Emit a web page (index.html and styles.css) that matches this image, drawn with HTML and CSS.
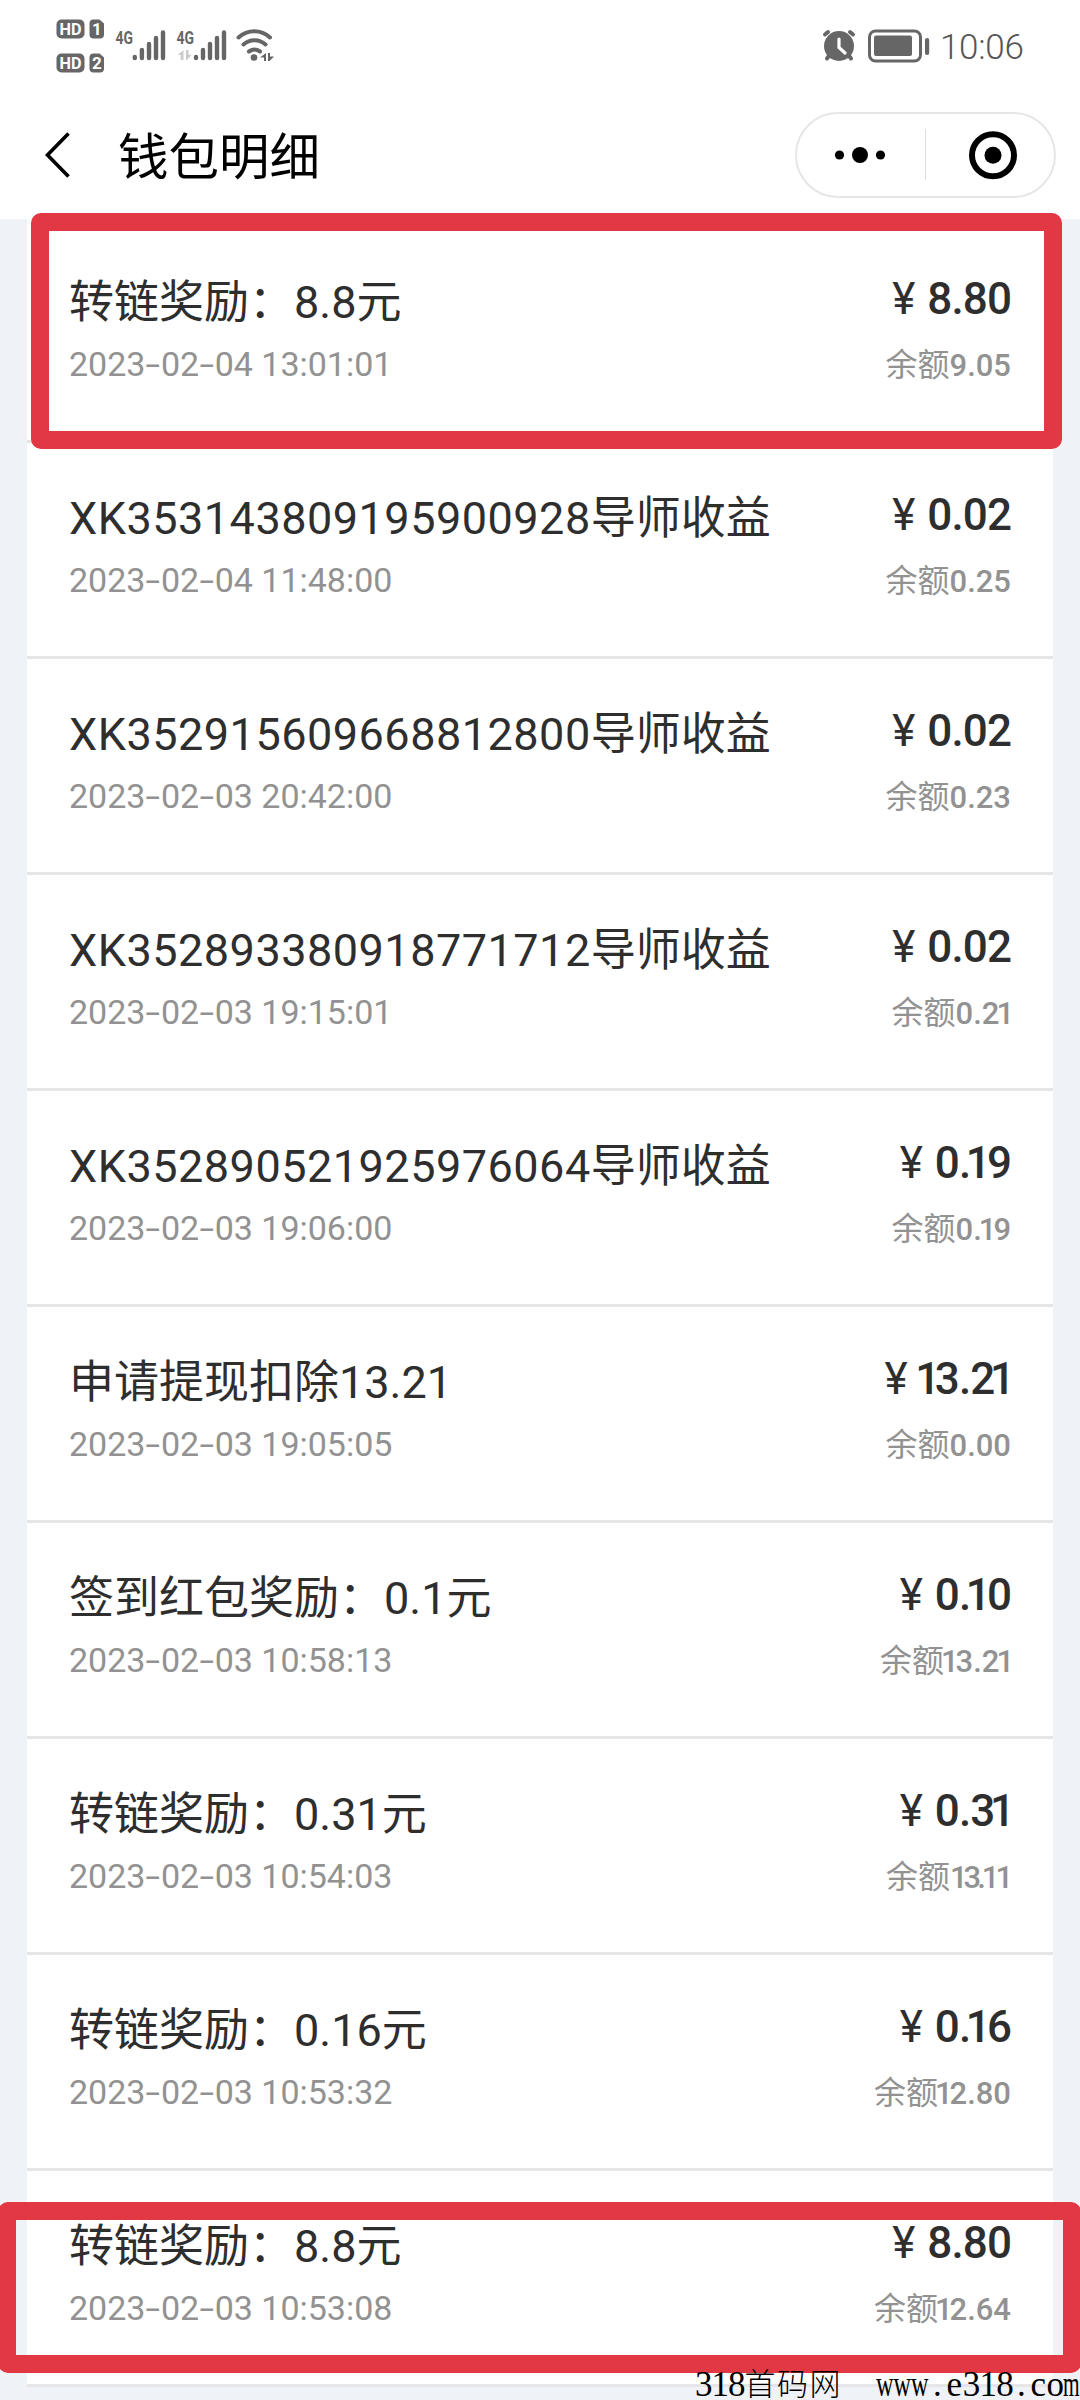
FILE: index.html
```html
<!DOCTYPE html>
<html lang="zh-CN">
<head>
<meta charset="utf-8">
<title>钱包明细</title>
<link rel="stylesheet" href="styles.css">
</head>
<body>
<header class="top">
  <div class="status">
    <svg class="status-left" width="260" height="90" viewBox="0 0 260 90">
      <g fill="#666">
        <rect x="16.500" y="19.500" width="28" height="19" rx="5"/>
        <path d="M53.500 19.500h6l4.500 4v11a4 4 0 0 1-4 4h-6.500a4 4 0 0 1-4-4v-11a4 4 0 0 1 4-4z"/>
        <rect x="16.500" y="53.500" width="28" height="19" rx="5"/>
        <path d="M53.500 53.500h6l4.500 4v11a4 4 0 0 1-4 4h-6.500a4 4 0 0 1-4-4v-11a4 4 0 0 1 4-4z"/>
      </g>
      <g class="badge-text">
        <text x="30.500" y="35" textLength="22" lengthAdjust="spacingAndGlyphs">HD</text>
        <text x="56.800" y="35">1</text>
        <text x="30.500" y="69" textLength="22" lengthAdjust="spacingAndGlyphs">HD</text>
        <text x="56.800" y="69">2</text>
      </g>
      <g class="net-text">
        <text x="75.500" y="43.500" textLength="17.500" lengthAdjust="spacingAndGlyphs">4G</text>
        <text x="136.500" y="43.500" textLength="17.500" lengthAdjust="spacingAndGlyphs">4G</text>
      </g>
      <g stroke="#666" stroke-width="4.400" stroke-linecap="round">
        <path d="M94.800 57v1M101.900 50v8M109 44v14M116 38v20M123 32.500v25.500"/>
        <path d="M156 57v1M163 50v8M170 44v14M177 38v20M184 32.500v25.500"/>
      </g>
      <path fill="#ccc" d="M143.500 50v10h-2.800v-5h-3zM146 50h2.500v4.500l3 .5-4.500 5h-1z"/>
      <g fill="none" stroke="#666" stroke-width="4" stroke-linecap="round">
        <path d="M198.500 37.500a23 23 0 0 1 31.500 0M203.500 44.500a16.500 16.500 0 0 1 22 0M209 51.500a9.500 9.500 0 0 1 11 0"/>
      </g>
      <circle cx="214" cy="57.500" r="3.300" fill="#666"/>
      <path fill="#666" d="M226 53v8h-2v-3.500h-4zM228 53h2v3.500h4l-4.500 4.500H228z"/>
    </svg>
    <svg class="status-right" width="130" height="90" viewBox="0 0 130 90">
      <g stroke="#666" stroke-width="4" stroke-linecap="round" fill="none">
        <path d="M5 34.500l3-2.500M33 34.500L30 32M9.500 55l-2.500 3.500M28.500 55l2.500 3.500"/>
      </g>
      <circle cx="19" cy="46" r="15" fill="#666"/>
      <path d="M19 39v8.500l6 5.500" fill="none" stroke="#fff" stroke-width="3.200" stroke-linecap="round"/>
      <rect x="49.500" y="31" width="51" height="30" rx="6" fill="none" stroke="#666" stroke-width="3"/>
      <rect x="54" y="35.500" width="38" height="20.500" rx="2" fill="#666"/>
      <rect x="105" y="38" width="4.200" height="17" rx="2" fill="#666"/>
    </svg>
    <span class="clock">10:06</span>
  </div>
  <div class="nav">
    <svg class="back" width="30" height="50" viewBox="0 0 30 50"><path d="M25.500 3.500L4.500 25l21 21.500" fill="none" stroke="#000" stroke-width="3.600"/></svg>
    <h1 class="nav-title">钱包明细</h1>
    <div class="capsule">
      <svg width="258" height="84" viewBox="0 0 258 84">
        <circle cx="42.500" cy="41" r="4.600"/><circle cx="63" cy="41" r="8"/><circle cx="83.500" cy="41" r="4.600"/>
        <path d="M128.500 15v51" stroke="#ddd" stroke-width="1"/>
        <circle cx="196" cy="41.300" r="21" fill="none" stroke="#000" stroke-width="6"/><circle cx="196" cy="41.300" r="8.500"/>
      </svg>
    </div>
  </div>
</header>
<main class="page">
  <ul class="list">
    <li class="row">
      <div class="info"><p class="title">转链奖励：8.8元</p><p class="date">2023<i>-</i>02<i>-</i>04 13:01:01</p></div>
      <div class="sum"><p class="amount"><span class="yen">¥</span>8.80</p><p class="rest">余额<b>9.05</b></p></div>
    </li>
    <li class="row">
      <div class="info"><p class="title"><span class="code">XK353143809195900928</span>导师收益</p><p class="date">2023<i>-</i>02<i>-</i>04 11:48:00</p></div>
      <div class="sum"><p class="amount"><span class="yen">¥</span>0.02</p><p class="rest">余额<b>0.25</b></p></div>
    </li>
    <li class="row">
      <div class="info"><p class="title"><span class="code">XK352915609668812800</span>导师收益</p><p class="date">2023<i>-</i>02<i>-</i>03 20:42:00</p></div>
      <div class="sum"><p class="amount"><span class="yen">¥</span>0.02</p><p class="rest">余额<b>0.23</b></p></div>
    </li>
    <li class="row">
      <div class="info"><p class="title"><span class="code">XK352893380918771712</span>导师收益</p><p class="date">2023<i>-</i>02<i>-</i>03 19:15:01</p></div>
      <div class="sum"><p class="amount"><span class="yen">¥</span>0.02</p><p class="rest">余额<b>0.2<s>1</s></b></p></div>
    </li>
    <li class="row">
      <div class="info"><p class="title"><span class="code">XK352890521925976064</span>导师收益</p><p class="date">2023<i>-</i>02<i>-</i>03 19:06:00</p></div>
      <div class="sum"><p class="amount"><span class="yen">¥</span>0.<s>1</s>9</p><p class="rest">余额<b>0.<s>1</s>9</b></p></div>
    </li>
    <li class="row">
      <div class="info"><p class="title">申请提现扣除13.21</p><p class="date">2023<i>-</i>02<i>-</i>03 19:05:05</p></div>
      <div class="sum"><p class="amount"><span class="yen">¥</span><s>1</s>3.2<s>1</s></p><p class="rest">余额<b>0.00</b></p></div>
    </li>
    <li class="row">
      <div class="info"><p class="title">签到红包奖励：0.1元</p><p class="date">2023<i>-</i>02<i>-</i>03 10:58:13</p></div>
      <div class="sum"><p class="amount"><span class="yen">¥</span>0.<s>1</s>0</p><p class="rest">余额<b><s>1</s>3.2<s>1</s></b></p></div>
    </li>
    <li class="row">
      <div class="info"><p class="title">转链奖励：0.31元</p><p class="date">2023<i>-</i>02<i>-</i>03 10:54:03</p></div>
      <div class="sum"><p class="amount"><span class="yen">¥</span>0.3<s>1</s></p><p class="rest">余额<b class="tight">13.11</b></p></div>
    </li>
    <li class="row">
      <div class="info"><p class="title">转链奖励：0.16元</p><p class="date">2023<i>-</i>02<i>-</i>03 10:53:32</p></div>
      <div class="sum"><p class="amount"><span class="yen">¥</span>0.<s>1</s>6</p><p class="rest">余额<b><s>1</s>2.80</b></p></div>
    </li>
    <li class="row">
      <div class="info"><p class="title">转链奖励：8.8元</p><p class="date">2023<i>-</i>02<i>-</i>03 10:53:08</p></div>
      <div class="sum"><p class="amount"><span class="yen">¥</span>8.80</p><p class="rest">余额<b><s>1</s>2.64</b></p></div>
    </li>
  </ul>
</main>
<div class="mark mark-first"></div>
<div class="mark mark-last"></div>
<div class="watermark"><span class="lead">318</span><span class="hanzi">首码网</span><span class="site"><span class="www">www</span><u>.</u><u>e</u><u>3</u><u>1</u><u>8</u><u>.</u><u>c</u><u>o</u><span class="em">m</span></span></div>
</body>
</html>
```

FILE: styles.css
```css
* { box-sizing: border-box; margin: 0; padding: 0; }
body {
  position: relative;
  width: 1080px;
  height: 2400px;
  overflow: hidden;
  background: #eff3f7;
  font-family: Roboto, "Noto Sans CJK SC", sans-serif;
  color: #2e2e2e;
}
i, s, u { font-style: normal; text-decoration: none; }

.top { height: 219px; background: #fff; }
.status { display: flex; height: 90px; padding-left: 40px; }
.status-right { margin-left: 520px; }
.badge-text { font-size: 17px; font-weight: 700; fill: #fff; text-anchor: middle; }
.net-text { font-size: 18px; font-weight: 700; fill: #666; }
.clock { margin-left: -10px; font-size: 35px; font-weight: 300; letter-spacing: -.3px; line-height: 95px; color: #555; }

.nav { display: flex; align-items: center; height: 129px; padding: 0 24px 0 43px; }
.back { flex: none; }
.nav-title { margin-left: 45px; padding-top: 6px; font-size: 50.5px; font-weight: 400; line-height: 60px; color: #000; }
.capsule {
  width: 261px;
  height: 86px;
  margin-left: auto;
  border: 2px solid #e6e6e6;
  border-radius: 43px;
}
.capsule svg { display: block; }

.page { padding: 0 27px; }
.list { padding-top: 8px; background: #fff; list-style: none; }
.row {
  display: flex;
  justify-content: space-between;
  height: 216px;
  padding: 45px 42px 0;
  border-bottom: 3px solid #e6e6e6;
  white-space: nowrap;
}
.title { padding-top: 1px; font-size: 45px; line-height: 60px; }
.code { letter-spacing: .5px; }
.date { margin-top: 11px; font-size: 34px; line-height: 40px; color: #929292; }
.date i { display: inline-block; width: 15.5px; transform: scaleX(1.55); text-align: center; }
.sum { text-align: right; }
.amount { padding-top: 1px; font-size: 44px; font-weight: 500; letter-spacing: -.9px; line-height: 52px; }
.yen { margin-right: 13px; font-weight: 400; }
.rest { margin-top: 18px; font-size: 32px; line-height: 44px; color: #929292; }
.rest b { font-size: 31px; font-weight: 500; }
.amount s { margin: 0 -4.5px; }
.amount s:last-child { margin-right: -3px; }
.rest s { margin: 0 -3px; }
.rest .tight { letter-spacing: -4px; margin-right: 2px; }

.mark { position: absolute; border: 18px solid #e13843; border-radius: 10px; }
.mark-first { left: 31px; top: 213px; width: 1031px; height: 236px; }
.mark-last { left: -2px; top: 2202px; width: 1083px; height: 171px; }

.watermark {
  position: absolute;
  right: 0;
  bottom: -5px;
  display: flex;
  width: 385px;
  height: 40px;
  font-family: "Liberation Serif", "Noto Sans CJK SC", serif;
  font-size: 35px;
  line-height: 40px;
  color: #000;
  white-space: nowrap;
}
.lead { letter-spacing: -1px; }
.hanzi { font-weight: 300; font-size: 31px; letter-spacing: 1.5px; }
.site { display: flex; margin-left: auto; letter-spacing: 0; }
.www { width: 53px; transform: scaleX(.69); transform-origin: left; }
.site u { width: 16.8px; text-align: center; }
.em { width: 16.6px; transform: scaleX(.61); transform-origin: left; }
```
